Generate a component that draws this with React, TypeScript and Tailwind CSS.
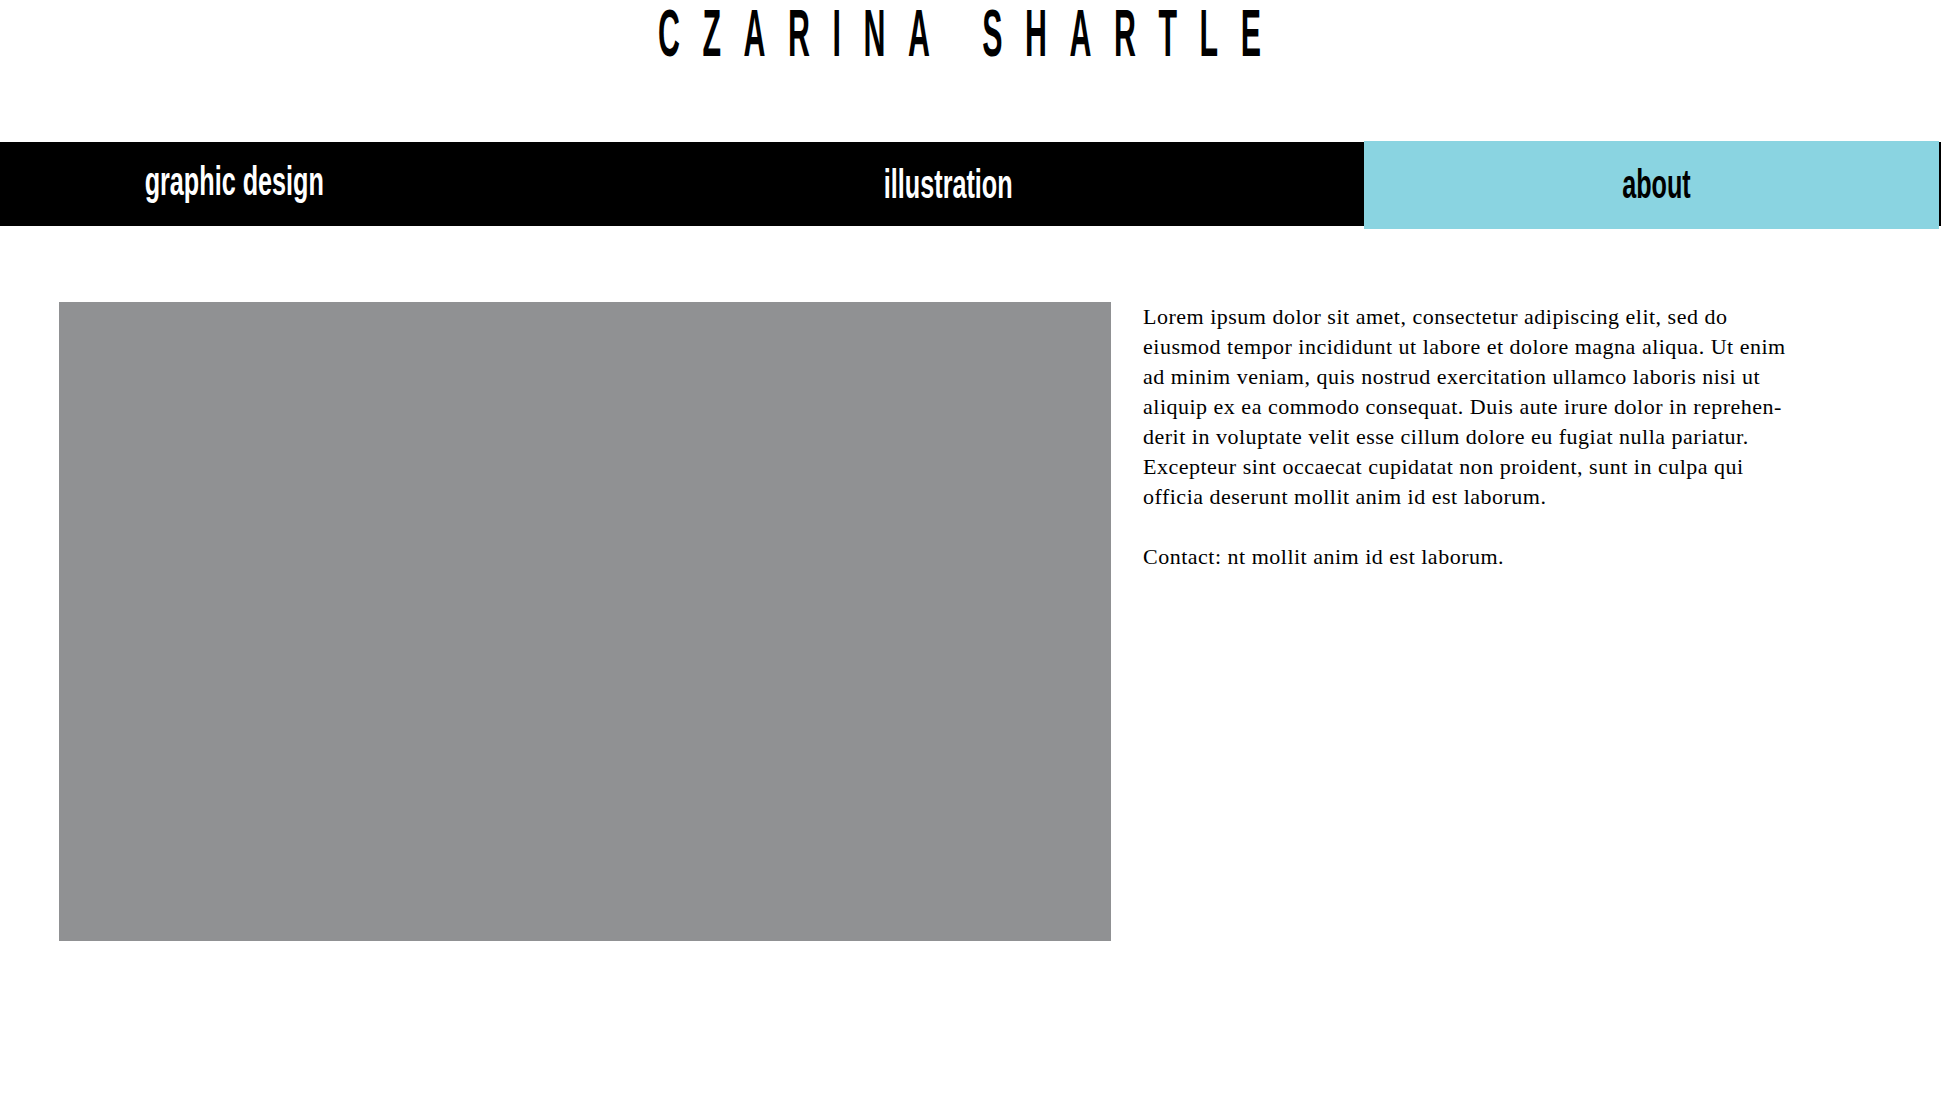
const navFont = { fontFamily: '"Liberation Sans", Arial, sans-serif' };

const lines = [
  "Lorem ipsum dolor sit amet, consectetur adipiscing elit, sed do",
  "eiusmod tempor incididunt ut labore et dolore magna aliqua. Ut enim",
  "ad minim veniam, quis nostrud exercitation ullamco laboris nisi ut",
  "aliquip ex ea commodo consequat. Duis aute irure dolor in reprehen-",
  "derit in voluptate velit esse cillum dolore eu fugiat nulla pariatur.",
  "Excepteur sint occaecat cupidatat non proident, sunt in culpa qui",
  "officia deserunt mollit anim id est laborum.",
];

const NavLabel = ({ children }: { children: string }) => (
  <span className="inline-block scale-x-[0.63] text-[40px] leading-[40px] font-bold">
    {children}
  </span>
);

export default function App() {
  return (
    <div className="min-h-[1105px] w-full bg-white font-['Liberation_Sans',Arial,sans-serif] text-black">
      <header className="h-[142px] flex justify-center">
        <h1 className="inline-block scale-x-[0.46] text-[66px] leading-[66px] font-bold tracking-[49px]">
          CZARINA SHARTLE
        </h1>
      </header>

      <nav className="flex items-start h-[84px] bg-black" style={navFont}>
        <a className="w-[468px] h-full flex justify-center pt-[19px] text-white">
          <NavLabel>graphic design</NavLabel>
        </a>
        <a className="w-[896px] h-full flex justify-center pl-[64px] pt-[22px] text-white">
          <NavLabel>illustration</NavLabel>
        </a>
        <a className="w-[575px] h-[88px] -mt-px flex justify-center pl-[9px] pt-[23px] bg-[#8ad4e1] text-black">
          <NavLabel>about</NavLabel>
        </a>
      </nav>

      <main className="flex items-start mt-[76px] pl-[59px]">
        <div className="w-[1052px] h-[639px] shrink-0 bg-[#909193]" />
        <div className="ml-[32px] font-['Liberation_Serif','Times_New_Roman',serif] text-[22px] leading-[30px] tracking-[0.5px] text-black whitespace-nowrap">
          {lines.map((l, i) => (
            <div key={i}>{l}</div>
          ))}
          <div className="h-[30px]" />
          <div>Contact: nt mollit anim id est laborum.</div>
        </div>
      </main>
    </div>
  );
}
